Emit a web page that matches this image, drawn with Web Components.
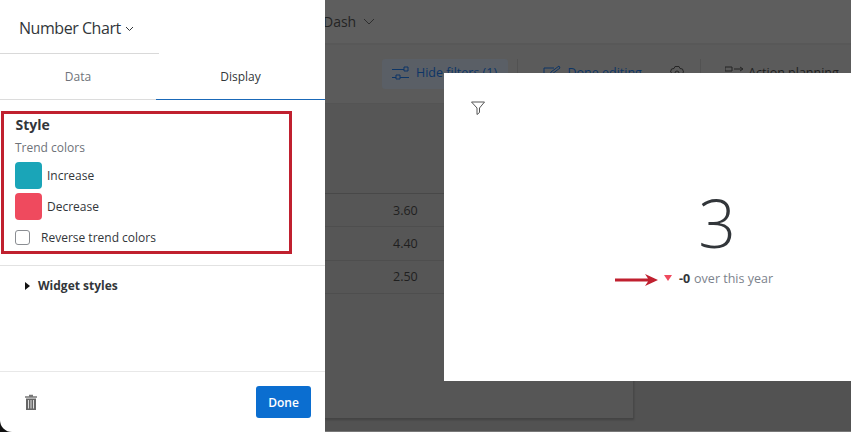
<!doctype html>
<html><head><meta charset="utf-8"><style>
html,body{margin:0;padding:0;background:#525252}
body{font-family:"Open Sans","Liberation Sans",sans-serif}
</style></head><body>
<x-app>
  <x-backdrop></x-backdrop>
  <x-widget></x-widget>
  <x-drawer></x-drawer>
</x-app>
<script>
function def(name,html){customElements.define(name,class extends HTMLElement{constructor(){super();this.attachShadow({mode:'open'}).innerHTML=html;}});}
def('x-app',`<style>:host{display:block;position:relative;width:851px;height:432px;overflow:hidden;background:#525252;box-shadow:inset 0 -1px 0 #777}</style><slot></slot>`);
def('x-backdrop',`<style>
:host{display:flex;flex-direction:column;height:431px;padding-left:325px;box-sizing:border-box;color:#1f1f1f;font-size:12.500px;overflow:hidden}
.top{height:43px;background:#5e5e5e;border-bottom:2px solid #585858;box-sizing:content-box;display:flex;align-items:center;gap:7px;font-size:14px;color:#242424;flex:none}
.top span{margin-left:-2px}
.bar{height:59px;background:#5b5b5b;border-bottom:1px solid #555;display:flex;align-items:flex-start;padding-top:14px;box-sizing:border-box;flex:none}
.hide{margin-left:57px;width:126px;height:30px;background:#5a5f66;border-radius:3px;display:flex;align-items:center;gap:6px;padding:0 0 3px 10px;box-sizing:border-box;color:#0d3566;font-size:12.5px;white-space:nowrap}
.rest{display:flex;align-items:center;height:30px;padding-bottom:3px;box-sizing:border-box;color:#0d3566;font-size:12.5px;white-space:nowrap}
.sep{width:1px;height:24px;background:#525252;margin:0 25px 0 9px}
.card{width:309px;height:315px;background:#565656;box-sizing:border-box;border-right:1px solid #484848;border-bottom:1px solid #444;box-shadow:0 1px 2px rgba(0,0,0,.2);display:flex;flex-direction:column;padding-top:89px;flex:none}
.row{height:32.33px;border-top:1px solid #4e4e4e;box-sizing:content-box;display:flex;align-items:center;padding-left:68px;flex:none}
.row.first{border-top:1px solid #484848}
</style>
<div class="top"><span>Dash</span><svg width="12" height="8" viewBox="0 0 12 8"><path d="M1 1l5 5 5-5" fill="none" stroke="#2e2e2e" stroke-width="1"/></svg></div>
<div class="bar">
<div class="hide"><svg width="18" height="16" viewBox="0 0 18 16" fill="none" stroke="#0d3566"><path d="M0 4.500h12M12 2h4v4h-4zM0 12.500h4M4 10h4v4H4zM8 12.500h9"/></svg>Hide filters (1)</div>
<div class="sep"></div>
<div class="rest"><svg width="18" height="16" viewBox="0 0 18 16" fill="none" stroke="#0d3566"><path d="M11 3H1v11h13V8M7 10l1-3 8-6 1 2-8 6z"/></svg>&nbsp;&nbsp;Done editing</div>
<div class="rest" style="margin-left:27px"><svg width="16" height="16" viewBox="0 0 16 16" fill="none" stroke="#252525"><path d="M6 1.500h4l1 2 2.500.5 1 3-1.500 2 .5 3-3 1.500-2-1-2 1-3-1.500.5-3L1.500 7l1-3L5 3.500z"/><circle cx="8" cy="8" r="2"/></svg></div>
<div class="sep" style="margin:0 24px 0 15px"></div>
<div class="rest" style="color:#1f1f1f"><svg width="20" height="16" viewBox="0 0 20 16" fill="none" stroke="#252525"><path d="M0 2h7v4H0zM9 4h8M15 2l3 2-3 2M0 10h7M0 14h7"/></svg>&nbsp;Action planning</div>
</div>
<div class="card">
<div class="row first">3.60</div><div class="row">4.40</div><div class="row">2.50</div><div class="row" style="height:0"></div>
</div>`);
def('x-widget',`<style>
:host{position:absolute;left:444px;top:73px;width:544px;height:308px;background:#fff;display:flex;flex-direction:column;align-items:center}
svg.f{position:absolute;left:27px;top:28px}
.num{margin-top:107px;margin-left:2px;font-size:66px;line-height:84px;font-weight:300;color:#32363a}
.trend{display:flex;align-items:center;font-size:12.5px;color:#7c828c;margin-top:5px;margin-left:5px;height:18px;white-space:nowrap}
.arrow{position:absolute;left:171px;top:201px}
.tri{width:0;height:0;border-left:4px solid transparent;border-right:4px solid transparent;border-top:6px solid #ef4a5e;margin-right:7px}
b{color:#32363a;margin-right:4px;font-weight:700}
</style>
<svg class="f" width="14" height="14" viewBox="0 0 14 14" fill="none" stroke="#555" stroke-width="1"><path d="M.5 1h13L8.500 7v4.500L6 13.500V7z"/></svg>
<div class="num">3</div>
<svg class="arrow" width="44" height="12" viewBox="0 0 44 12"><path d="M0 4.500h33L30 0l13 6-13 6 3-4.500H0z" fill="#c0202f"/></svg>
<div class="trend"><span class="tri"></span><b>-0</b>over this year</div>`);
def('x-drawer',`<style>
:host{position:absolute;left:0;top:0;width:325px;height:432px;background:#111;display:block}
.in{width:100%;height:100%;background:#fff;border-bottom-left-radius:12px;display:flex;flex-direction:column;color:#32363a;font-size:12px;box-sizing:border-box}
.head{width:159px;height:54px;border-bottom:1px solid #d9d9d9;box-sizing:border-box;display:flex;align-items:center;padding:2px 0 0 19px;gap:4px;font-size:16px;letter-spacing:-.45px;white-space:nowrap}
.head svg{margin-top:3px}
.tabs{display:grid;grid-template-columns:156px 169px;height:46px;font-size:12px}
.tabs div{display:flex;align-items:center;justify-content:center;border-bottom:1px solid #dcdcdc;box-sizing:border-box}
.tabs .off{color:#6e7279}
.tabs .on{border-bottom:1px solid #1a69b8}
.box{margin:11px 0 0 1px;width:291px;height:143px;border:3px solid #c0202f;box-sizing:border-box;padding:2px 0 0 11.500px;display:flex;flex-direction:column}
.t{font-weight:700;font-size:14px;line-height:18px}
.sub{color:#6e7279;line-height:16px;margin-top:6px;margin-left:-.5px}
.c{display:flex;align-items:center;gap:5px;margin-top:4px;height:27px;margin-left:-.5px}
.c i{display:block;width:27px;height:27px;border-radius:4px}
.sub + .c{margin-top:6px}
.rev{display:flex;align-items:center;margin-top:10px;height:15px;gap:11px;margin-left:-.5px}
.rev i{display:block;width:15px;height:15px;border:1px solid #8a8d92;border-radius:3px;box-sizing:border-box}
.w{margin-top:11px;border-top:1px solid #e2e2e2;height:106px;box-sizing:border-box;padding:11px 0 0 25px;display:flex;align-items:flex-start;gap:8px;font-weight:700;line-height:18px}
.w svg{margin-top:5px}
.foot{border-top:1px solid #e8e8e8;flex:1;display:flex;align-items:flex-start;justify-content:space-between;padding:14px 14px 0 24px}
.foot svg{margin-top:8px}
.done{width:55px;height:32px;background:#0b6ed0;border-radius:3px;color:#fff;display:flex;align-items:center;justify-content:center;font-size:12px;font-weight:600}
</style>
<div class="in">
<div class="head">Number Chart<svg width="9" height="6" viewBox="0 0 9 6"><path d="M1 1l3.500 3.500L8 1" fill="none" stroke="#32363a"/></svg></div>
<div class="tabs"><div class="off">Data</div><div class="on">Display</div></div>
<div class="box">
<div class="t">Style</div><div class="sub">Trend colors</div>
<div class="c"><i style="background:#1aa5b8"></i>Increase</div>
<div class="c"><i style="background:#ef4a5e"></i>Decrease</div>
<div class="rev"><i></i>Reverse trend colors</div>
</div>
<div class="w"><svg width="5" height="8" viewBox="0 0 5 8"><path d="M0 0l5 4-5 4z" fill="#111"/></svg>Widget styles</div>
<div class="foot"><svg width="14" height="16" viewBox="0 0 14 16"><path d="M5 1.500h4M1 3h12" stroke="#777" stroke-width="1.500" fill="none"/><path d="M2 4.500h10V16H2z" fill="#666"/><path d="M4.500 6v8.500M7 6v8.500M9.500 6v8.500" stroke="#ddd" stroke-width="1"/></svg><div class="done">Done</div></div>
</div>`);
</script>
</body></html>
